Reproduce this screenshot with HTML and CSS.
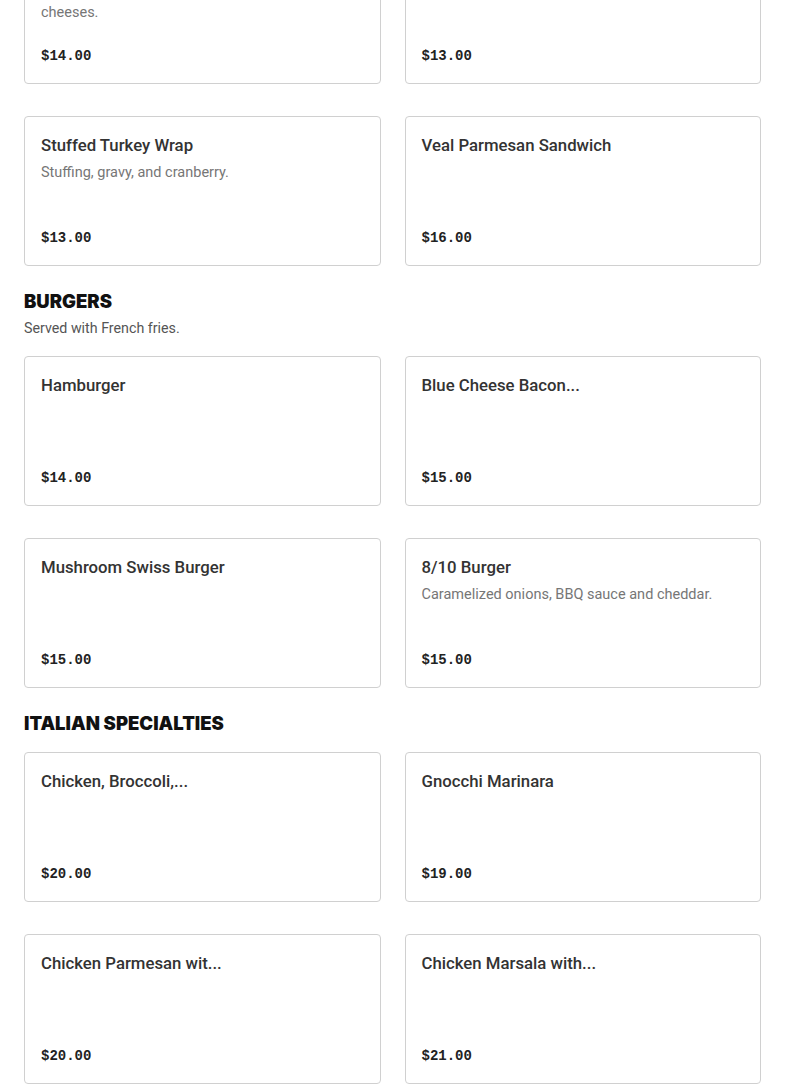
FILE: index.html
```html
<!DOCTYPE html>
<html>
<head>
<meta charset="UTF-8">
<title>Menu</title>
<meta name="viewport" content="width=device-width, initial-scale=1.0">
<link rel="stylesheet" href="styles.css">
</head>
<body>

<div class="menu">
  <!-- Sandwiches (scrolled, top of the list is above the fold) -->
  <section class="section section-cut">
    <div class="items">
      <div class="item">
        <span class="item-name">Italian Combo</span>
        <span class="item-desc">Ham, salami, capicola, provolone and mozzarella<br>cheeses.</span>
        <span class="item-price">$14.00</span>
      </div>
      <div class="item">
        <span class="item-name">Roast Beef Sandwich</span>
        <span class="item-price">$13.00</span>
      </div>
      <div class="item">
        <span class="item-name">Stuffed Turkey Wrap</span>
        <span class="item-desc">Stuffing, gravy, and cranberry.</span>
        <span class="item-price">$13.00</span>
      </div>
      <div class="item">
        <span class="item-name">Veal Parmesan Sandwich</span>
        <span class="item-price">$16.00</span>
      </div>
    </div>
  </section>

  <section class="section">
    <h2 class="section-title">Burgers</h2>
    <p class="section-desc">Served with French fries.</p>
    <div class="items">
      <div class="item">
        <span class="item-name">Hamburger</span>
        <span class="item-price">$14.00</span>
      </div>
      <div class="item">
        <span class="item-name">Blue Cheese Bacon...</span>
        <span class="item-price">$15.00</span>
      </div>
      <div class="item">
        <span class="item-name">Mushroom Swiss Burger</span>
        <span class="item-price">$15.00</span>
      </div>
      <div class="item">
        <span class="item-name">8/10 Burger</span>
        <span class="item-desc">Caramelized onions, BBQ sauce and cheddar.</span>
        <span class="item-price">$15.00</span>
      </div>
    </div>
  </section>

  <section class="section">
    <h2 class="section-title">Italian Specialties</h2>
    <div class="items">
      <div class="item">
        <span class="item-name">Chicken, Broccoli,...</span>
        <span class="item-price">$20.00</span>
      </div>
      <div class="item">
        <span class="item-name">Gnocchi Marinara</span>
        <span class="item-price">$19.00</span>
      </div>
      <div class="item">
        <span class="item-name">Chicken Parmesan wit...</span>
        <span class="item-price">$20.00</span>
      </div>
      <div class="item">
        <span class="item-name">Chicken Marsala with...</span>
        <span class="item-price">$21.00</span>
      </div>
    </div>
  </section>
</div>

</body>
</html>
```

FILE: styles.css
```css
body {
  margin: 0;
  padding: 0;
  background-color: white;
  color: #222;
  font-family: Roboto, "Noto Sans", "Liberation Sans", sans-serif;
  -webkit-font-smoothing: antialiased;
  overflow: hidden;
}
.menu {
  padding: 0 24px;
}
.section {
  margin-top: 24px;
}
/* page is scrolled: the first cards start above the top edge */
.section-cut {
  margin-top: -66px;
}
.section-title {
  margin: 0;
  font-family: Inter, "Liberation Sans", sans-serif;
  font-size: 18.5px;
  line-height: 22px;
  font-weight: 900;
  text-transform: uppercase;
  color: #111;
}
.section-desc {
  margin: 5px 0 0;
  font-size: 14.25px;
  line-height: 22px;
  color: #555;
}
.section-title + .items {
  margin-top: 18px;
}
.section-desc + .items {
  margin-top: 17px;
}
.items {
  display: grid;
  grid-template-columns: 1fr 1fr;
  column-gap: 24px;
  row-gap: 32px;
}
.item {
  display: flex;
  flex-direction: column;
  box-sizing: border-box;
  height: 150px;
  padding: 16px;
  border: 1px solid #d0d0d0;
  border-radius: 4px;
}
.item-name {
  font-size: 16.75px;
  line-height: 24px;
  font-weight: 500;
  color: #333;
}
.item-desc {
  margin-top: 5px;
  font-size: 14.5px;
  line-height: 22px;
  color: #767676;
}
.item-price {
  margin-top: auto;
  font-family: "Liberation Mono", "DejaVu Sans Mono", monospace;
  font-size: 14px;
  line-height: 22px;
  font-weight: bold;
  color: #222;
}
```
